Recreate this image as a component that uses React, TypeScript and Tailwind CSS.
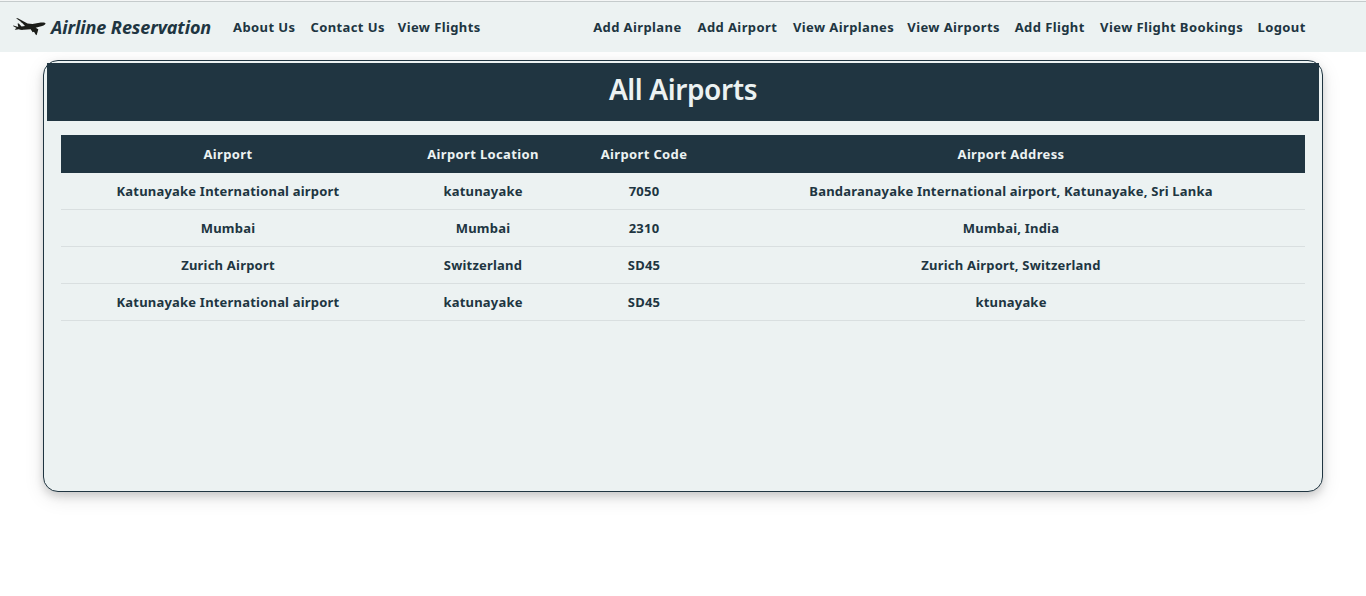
const leftLinks = [
  { label: "About Us", width: "w-[63px]" },
  { label: "Contact Us", width: "w-[73px]" },
  { label: "View Flights", width: "w-[83px]" },
];

const rightLinks = [
  { label: "Add Airplane", width: "w-[90px]" },
  { label: "Add Airport", width: "w-[81px]" },
  { label: "View Airplanes", width: "w-[100px]" },
  { label: "View Airports", width: "w-[93px]" },
  { label: "Add Flight", width: "w-[71px]" },
  { label: "View Flight Bookings", width: "w-[143px]" },
  { label: "Logout", width: "w-[48px]" },
];

const airports = [
  ["Katunayake International airport", "katunayake", "7050", "Bandaranayake International airport, Katunayake, Sri Lanka"],
  ["Mumbai", "Mumbai", "2310", "Mumbai, India"],
  ["Zurich Airport", "Switzerland", "SD45", "Zurich Airport, Switzerland"],
  ["Katunayake International airport", "katunayake", "SD45", "ktunayake"],
];

function PlaneLogo() {
  return (
    <svg className="ml-3 h-5 w-[34px] shrink-0" viewBox="0 0 34 20" fill="#1b1d19" aria-hidden="true">
      <path d="M4 1.2 5.8 1.3 15.5 6.5 20.5 7.1 28.8 5.6C31.2 5.2 33.2 5.5 33.5 6.3 33.7 7.3 32.2 8.4 30.1 9L23.6 10.8 26.3 12.3 25.5 15.3 24.6 18.2 23.6 17.6 22 14.8 20.6 15.2 18.7 12.2 11.8 12.8C9.7 13.1 8 12.8 6.7 12.2L3.7 12.7 2.7 12.2 4.6 11 1 8.9 1.4 8.5 6.3 9.9 5.6 6.6 6.8 6.6 9.5 9.5 13 9.1 10 5.8 8.8 5.2 8.7 4.5Z" />
    </svg>
  );
}

function NavLinks({ links }: { links: { label: string; width: string }[] }) {
  return (
    <ul className="flex gap-[14.4px] pt-[2px] tracking-[0.4px]">
      {links.map((link) => (
        <li key={link.label} className={`${link.width} shrink-0 whitespace-nowrap`}>
          <a href="#">{link.label}</a>
        </li>
      ))}
    </ul>
  );
}

export default function App() {
  return (
    <div className="h-[596px] overflow-hidden bg-white font-['Noto_Sans','Open_Sans',sans-serif] text-[13px] font-bold tracking-[0.2px] text-[#203541]">
      <nav className="relative z-10 flex h-[52px] items-center border-t border-t-[#f4f6f6] bg-[#ecf2f2] pr-[60.5px] shadow-[inset_0_1px_0_#c5cbcc]">
        <PlaneLogo />
        <a href="#" className="ml-[5px] w-[182px] shrink-0 pt-px text-[18px] font-bold whitespace-nowrap italic tracking-[-0.1px]">
          Airline Reservation
        </a>
        <NavLinks links={leftLinks} />
        <div className="grow" />
        <NavLinks links={rightLinks} />
      </nav>
      <main className="mx-[43px] mt-2 h-[432px] rounded-[15px] border border-[#203541] bg-[#ecf2f2] px-[3px] pt-0.5 shadow-[0_4px_8px_0_rgba(0,0,0,0.15),0_6px_20px_0_rgba(0,0,0,0.1)]">
        <h1 className="h-[58px] bg-[#203541] pt-2 text-center text-[28px] leading-9 font-semibold tracking-[-0.4px] text-[#ecf2f2]">
          All Airports
        </h1>
        <table className="mx-[14px] mt-[14px] w-[1244px] table-fixed border-separate border-spacing-0 text-center">
          <colgroup>
            <col className="w-[334px]" />
            <col className="w-[176px]" />
            <col className="w-[146px]" />
            <col className="w-[588px]" />
          </colgroup>
          <thead>
            <tr className="bg-[#203541] tracking-[0.35px] text-[#ecf2f2]">
              {["Airport", "Airport Location", "Airport Code", "Airport Address"].map((title) => (
                <th key={title} className="h-[38px] p-0 pt-px">
                  {title}
                </th>
              ))}
            </tr>
          </thead>
          <tbody>
            {airports.map((row, i) => (
              <tr key={i}>
                {row.map((cell, j) => (
                  <td key={j} className="h-[37px] border-b border-[#d9dfe0] p-0 pt-[2px]">
                    {cell}
                  </td>
                ))}
              </tr>
            ))}
          </tbody>
        </table>
      </main>
    </div>
  );
}
